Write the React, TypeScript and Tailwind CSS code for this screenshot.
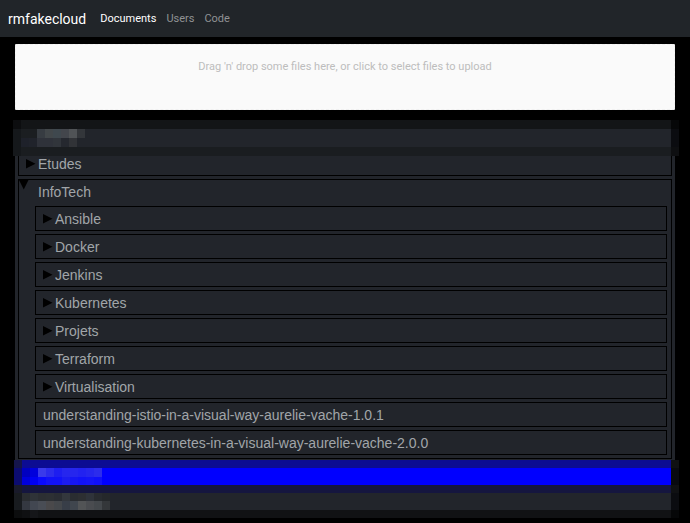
const folders = ["Ansible", "Docker", "Jenkins", "Kubernetes", "Projets", "Terraform", "Virtualisation"];
const files = [
  "understanding-istio-in-a-visual-way-aurelie-vache-1.0.1",
  "understanding-kubernetes-in-a-visual-way-aurelie-vache-2.0.0",
];

type Strip = { height: string; base: string; end: string; cells: string[] };

const topMosaic: Strip[] = [
  { height: "h-[9px]", base: "bg-[#131517]", end: "bg-[#060708]", cells: ["bg-[#0c0d0f]"] },
  {
    height: "h-[9px]", base: "bg-[#22252b]", end: "bg-[#0b0c10]",
    cells: ["bg-[#15181b]", "bg-[#1b1e21]", "bg-[#1b1e21]", "bg-[#373c42]", "bg-[#42474a]", "bg-[#3f484e]", "bg-[#43464c]", "bg-[#505356]", "bg-[#33363a]"],
  },
  {
    height: "h-[9px]", base: "bg-[#22252b]", end: "bg-[#0b0c10]",
    cells: ["bg-[#15181b]", "bg-[#1e212a]", "bg-[#20232b]", "bg-[#2f323a]", "bg-[#2f323a]", "bg-[#31353b]", "bg-[#25282f]", "bg-[#313337]"],
  },
  { height: "h-[9px]", base: "bg-[#1a1d20]", end: "bg-[#0e0f11]", cells: ["bg-[#15181b]"] },
];

const bottomMosaic: Strip[] = [
  { height: "h-[8px]", base: "bg-[#0c0c93]", end: "bg-[#101113]", cells: ["bg-[#15154b]"] },
  {
    height: "h-[9px]", base: "bg-[#0000ff]", end: "bg-[#090a10]",
    cells: ["bg-[#0c0c70]", "bg-[#0000c0]", "bg-[#0000dc]", "bg-[#3a3aea]", "bg-[#2c2cec]", "bg-[#1e1ef0]", "bg-[#2626ee]", "bg-[#2626ee]", "bg-[#2222f0]", "bg-[#2626ee]", "bg-[#2c2cec]"],
  },
  {
    height: "h-[8px]", base: "bg-[#0000ff]", end: "bg-[#090a10]",
    cells: ["bg-[#0c0c70]", "bg-[#0000dc]", "bg-[#0000f4]", "bg-[#0a0aff]", "bg-[#1212f8]", "bg-[#1212f8]", "bg-[#1c1cf0]", "bg-[#1616f4]", "bg-[#1212f8]", "bg-[#1414f8]", "bg-[#1010fa]"],
  },
  { height: "h-[8px]", base: "bg-[#15163f]", end: "bg-[#101113]", cells: ["bg-[#191a2a]"] },
  {
    height: "h-[8px]", base: "bg-[#22252b]", end: "bg-[#0b0c10]",
    cells: ["bg-[#181b1f]", "bg-[#2a2d31]", "bg-[#2f3338]", "bg-[#2c2f33]", "bg-[#2d3034]", "bg-[#2a2d33]", "bg-[#33373d]", "bg-[#2a2d31]", "bg-[#2d2f32]", "bg-[#2f333a]", "bg-[#282b2f]", "bg-[#25282b]"],
  },
  {
    height: "h-[9px]", base: "bg-[#22252b]", end: "bg-[#0b0c10]",
    cells: ["bg-[#181b1f]", "bg-[#343841]", "bg-[#424751]", "bg-[#494d55]", "bg-[#4a494b]", "bg-[#44474b]", "bg-[#383e48]", "bg-[#40464e]", "bg-[#525456]", "bg-[#4a4c50]", "bg-[#44484c]", "bg-[#34373a]"],
  },
  { height: "h-[8px]", base: "bg-[#111214]", end: "bg-[#060708]", cells: ["bg-[#0c0d0e]", "bg-[#0f1012]", "bg-[#151619]"] },
];

/** Pixelated strip that hides the name of a private entry. */
function Mosaic({ strips }: { strips: Strip[] }) {
  return (
    <div aria-hidden="true">
      {strips.map((strip, i) => (
        <div key={i} className={`flex ${strip.height} ${strip.base}`}>
          {strip.cells.map((cell, j) => (
            <span key={j} className={`w-2 ${cell}`} />
          ))}
          <span className={`ml-auto w-2 ${strip.end}`} />
        </div>
      ))}
    </div>
  );
}

function Arrow({ open = false }: { open?: boolean }) {
  return (
    <svg viewBox="0 0 10 10" className="size-[10px] shrink-0 fill-black" aria-hidden="true">
      <path d={open ? "M0 0h9.5L4.75 9.5z" : "M0 0v9.5L9.5 4.75z"} />
    </svg>
  );
}

function Folder({ name }: { name: string }) {
  return (
    <button
      type="button"
      aria-expanded="false"
      className="flex w-full items-center gap-[2px] border border-black pt-px pl-[7px] text-left leading-[22px]"
    >
      <Arrow />
      {name}
    </button>
  );
}

export default function App() {
  return (
    <div className="min-h-screen bg-black font-['Roboto',sans-serif]">
      <nav className="flex h-[37px] items-center bg-[#212529] px-2 pt-px text-[11px]">
        <a href="#home" className="mr-[14px] text-[14px] text-white">rmfakecloud</a>
        <div className="flex gap-[10px] text-[#909294]">
          <a href="#documents" className="text-white">Documents</a>
          <a href="#users">Users</a>
          <a href="#code">Code</a>
        </div>
      </nav>

      <main className="px-[15px] pt-[7px]">
        <button
          type="button"
          className="flex h-[66px] w-full items-start justify-center rounded-[1px] border border-dashed border-[#f0f0f0] bg-[#fafafa] pt-[14px] text-[11px] leading-4 text-[#bdbdbd]"
        >
          Drag 'n' drop some files here, or click to select files to upload
        </button>

        <section
          aria-label="Documents"
          className="mt-[10px] bg-[#22252b] font-['Liberation_Sans',Arial,sans-serif] text-[14px] text-[#a1a5a9]"
        >
          <div className="relative z-10 -mr-1 -mb-[5px] -ml-[2px]">
            <Mosaic strips={topMosaic} />
          </div>
          <div className="flex flex-col gap-[3px] px-[3px] pb-px">
            <Folder name="Etudes" />
            <div className="border border-black pb-[3px]">
              <button type="button" aria-expanded="true" className="flex w-full items-start gap-[9px] pb-[2px] text-left leading-6">
                <Arrow open />
                InfoTech
              </button>
              <ul className="flex flex-col gap-[3px] pr-1 pl-4">
                {folders.map((name) => (
                  <li key={name}>
                    <Folder name={name} />
                  </li>
                ))}
                {files.map((name) => (
                  <li key={name} className="border border-black px-[7px] pt-px leading-[22px]">
                    {name}
                  </li>
                ))}
              </ul>
            </div>
          </div>
          <div className="-mr-1 -ml-px">
            <Mosaic strips={bottomMosaic} />
          </div>
        </section>
      </main>
    </div>
  );
}
